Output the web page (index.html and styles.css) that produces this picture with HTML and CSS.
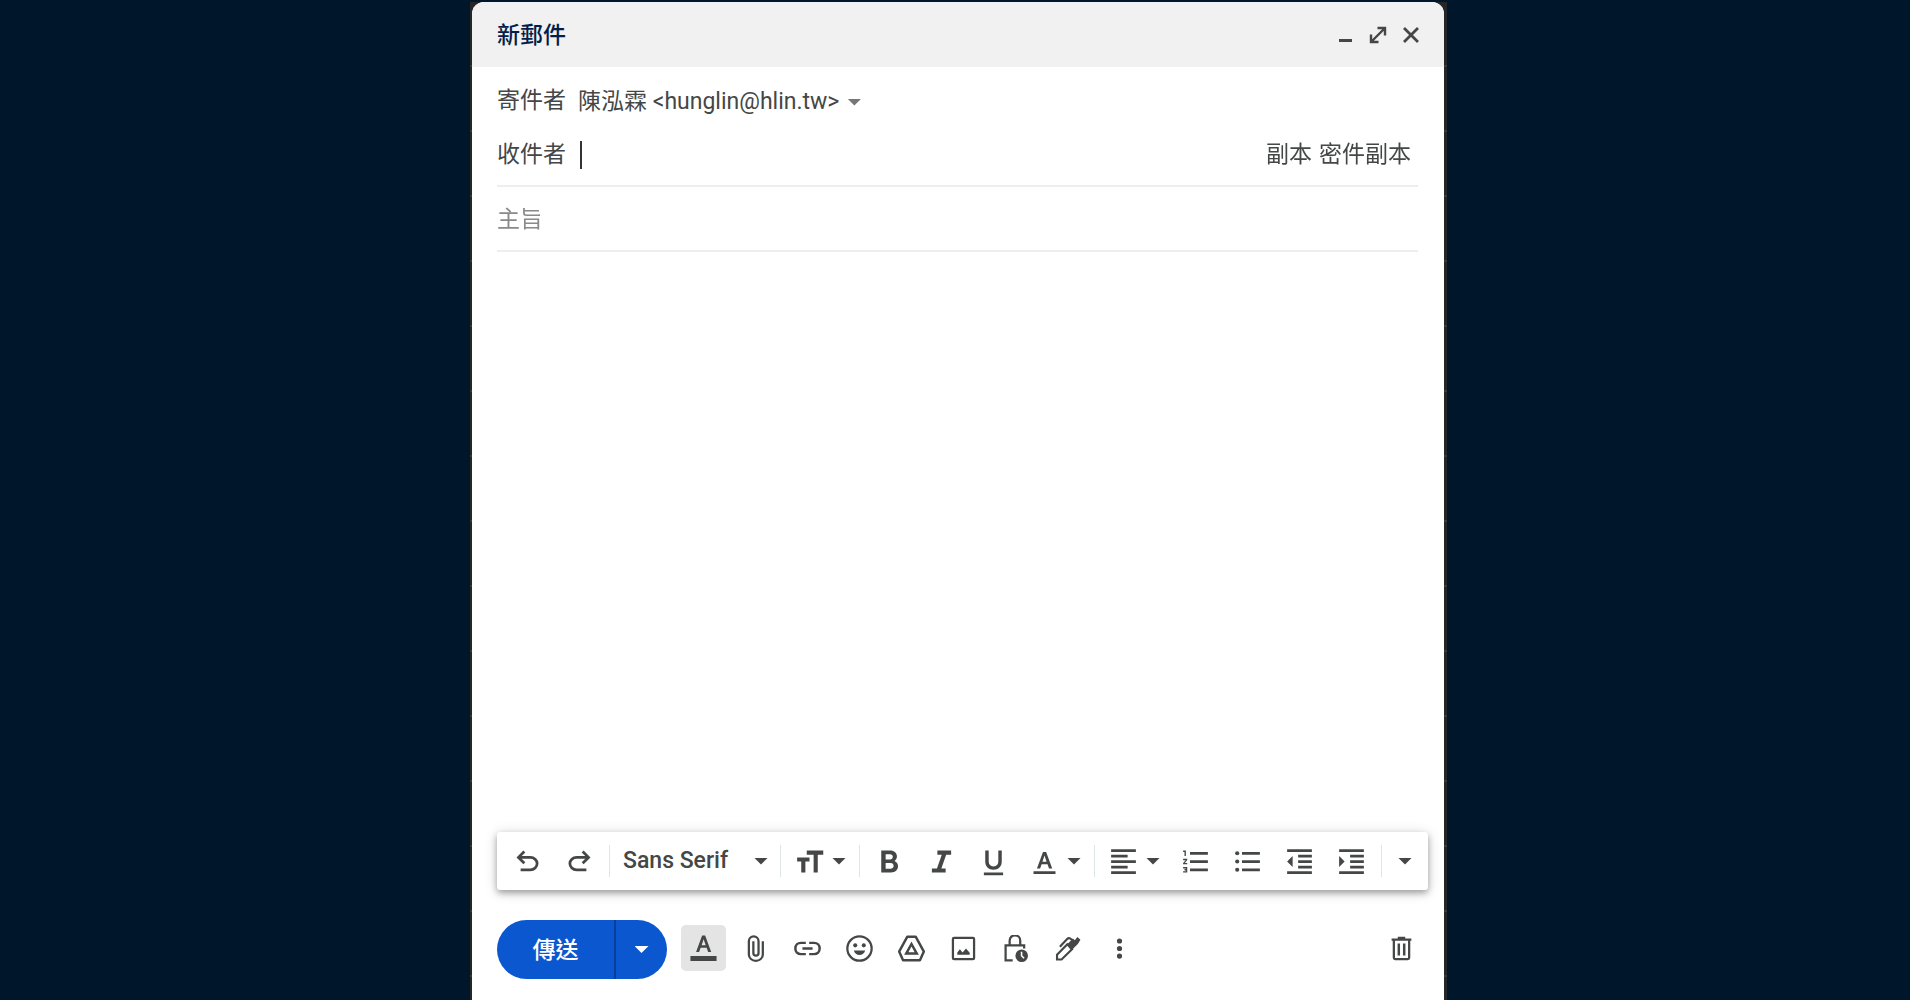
FILE: index.html
```html
<!DOCTYPE html>
<html lang="zh-Hant">
<head>
<meta charset="utf-8">
<title>新郵件</title>
<meta name="viewport" content="width=device-width, initial-scale=1">
<link rel="stylesheet" href="styles.css">
</head>
<body>
<div class="frame">
<main class="compose">
  <header class="titlebar">
    <h1 class="title">新郵件</h1>
    <div class="window-actions">
      <button type="button" aria-label="縮到最小"><svg viewBox="0 0 18 18"><path d="M3 13h13v3H3z"/></svg></button>
      <button type="button" aria-label="全螢幕"><svg viewBox="0 0 18 18"><path d="M8.500 2h7.500v7.500M2 8.500V16h7.500M2.500 15.500l13-13" fill="none" stroke="currentColor" stroke-width="2.400"/></svg></button>
      <button type="button" aria-label="關閉"><svg viewBox="0 0 18 18"><path d="M2 2l14 14M16 2L2 16" fill="none" stroke="currentColor" stroke-width="2.800"/></svg></button>
    </div>
  </header>

  <form class="mail">
    <div class="fields">
      <div class="row from">
        <span class="label">寄件者</span>
        <button type="button" class="sender">陳泓霖 &lt;hunglin@hlin.tw&gt;<span class="caret"></span></button>
      </div>
      <div class="row to">
        <label class="label" for="to">收件者</label>
        <span class="cursor"></span>
        <input id="to" class="to-input" type="text" autofocus>
        <div class="copies"><a href="#cc">副本</a><a href="#bcc">密件副本</a></div>
      </div>
      <div class="row subject">
        <input class="subject-input" type="text" placeholder="主旨" aria-label="主旨">
      </div>
    </div>

    <textarea class="body" aria-label="郵件內文"></textarea>

    <div class="format" role="toolbar" aria-label="格式設定">
      <div class="group">
        <button type="button" class="tool" aria-label="復原"><svg viewBox="0 0 24 24"><path d="M7 19v-2h7.100q1.575 0 2.738-1T18 13.500 16.838 11 14.100 10H7.800l2.600 2.600L9 14 4 9l5-5 1.400 1.400L7.800 8h6.300q2.425 0 4.163 1.575T20 13.500t-1.737 3.925T14.100 19z"/></svg></button>
        <button type="button" class="tool" aria-label="重做"><svg viewBox="0 0 24 24"><path d="M17 19v-2H9.900q-1.575 0-2.738-1T6 13.500 7.162 11 9.900 10h6.300l-2.600 2.600L15 14l5-5-5-5-1.400 1.400L16.200 8H9.900Q7.475 8 5.737 9.575T4 13.500t1.737 3.925T9.900 19z"/></svg></button>
      </div>
      <div class="group">
        <button type="button" class="font">Sans Serif<span class="caret"></span></button>
      </div>
      <div class="group">
        <button type="button" class="tool drop" aria-label="大小"><svg viewBox="0 0 24 24"><path d="M10 4v3h5v13h3V7h4V4zM3 12h3v8h3v-8h3V9H3z"/></svg><span class="caret"></span></button>
      </div>
      <div class="group">
        <button type="button" class="tool" aria-label="粗體"><svg viewBox="0 0 24 24"><path d="M6 4v16h7.200c2.900 0 5-1.800 5-4.500 0-1.900-1-3.200-2.500-3.900 1-.7 1.700-1.800 1.700-3.200C17.400 5.700 15.400 4 12.600 4zm3.200 2.700h3.200c1.200 0 2 .7 2 1.900s-.8 1.900-2 1.900H9.200zm0 6.300h3.600c1.400 0 2.200.8 2.200 2.100s-.8 2.100-2.200 2.100H9.200z"/></svg></button>
        <button type="button" class="tool" aria-label="斜體"><svg viewBox="0 0 24 24"><path d="M9 4v3h3.200l-3.500 10H5v3h10v-3h-3.100l3.500-10H19V4z"/></svg></button>
        <button type="button" class="tool" aria-label="底線"><svg viewBox="0 0 24 24"><path d="M12 18c3.600 0 6-2.300 6-6V4h-2.500v8c0 2.200-1.300 3.600-3.500 3.600S8.500 14.200 8.500 12V4H6v8c0 3.700 2.400 6 6 6zm-7 2v2h14v-2z"/></svg></button>
        <button type="button" class="tool drop" aria-label="文字顏色"><svg viewBox="0 0 24 24"><path d="M6.500 17h2.300l1.100-3h4.300l1.100 3h2.300L13.200 5h-2.300zm4-4.900L12 7.700l1.500 4.400zM4 19v2h16v-2z"/></svg><span class="caret"></span></button>
      </div>
      <div class="group">
        <button type="button" class="tool drop" aria-label="對齊"><svg viewBox="0 0 24 24"><path d="M3 3h18v2H3zm0 4h12v2H3zm0 4h18v2H3zm0 4h12v2H3zm0 4h18v2H3z"/></svg><span class="caret"></span></button>
        <button type="button" class="tool" aria-label="編號清單"><svg viewBox="0 0 24 24"><path d="M8 5h13v2H8zm0 6h13v2H8zm0 6h13v2H8zM4 8h1V4H3v1h1zM3 10.900V10h3v.9L4.200 13H6v1H3v-.9L4.800 11H3zM3 16v1h2v.5H4v1h1v.5H3v1h3v-4z"/></svg></button>
        <button type="button" class="tool" aria-label="項目符號清單"><svg viewBox="0 0 24 24"><path d="M8 5h13v2H8zm0 6h13v2H8zm0 6h13v2H8z"/><circle cx="4.500" cy="6" r="1.500"/><circle cx="4.500" cy="12" r="1.500"/><circle cx="4.500" cy="18" r="1.500"/></svg></button>
        <button type="button" class="tool" aria-label="減少縮排"><svg viewBox="0 0 24 24"><path d="M3 3h18v2H3zm8 4h10v2H11zm0 4h10v2H11zm0 4h10v2H11zm-8 4h18v2H3zM7 8v8l-4-4z"/></svg></button>
        <button type="button" class="tool" aria-label="增加縮排"><svg viewBox="0 0 24 24"><path d="M3 3h18v2H3zm8 4h10v2H11zm0 4h10v2H11zm0 4h10v2H11zm-8 4h18v2H3zM3 8v8l4-4z"/></svg></button>
      </div>
      <div class="group last">
        <button type="button" class="tool more" aria-label="更多格式設定選項"><span class="caret"></span></button>
      </div>
    </div>

    <div class="actions">
      <div class="send">
        <button type="submit" class="send-main">傳送</button>
        <button type="button" class="send-more" aria-label="更多傳送選項"><span class="caret"></span></button>
      </div>
      <div class="inserts">
        <button type="button" class="tool active" aria-label="格式選項"><svg viewBox="0 0 24 24"><path d="M6.600 14.500h2.200l1.100-3h4.400l1.100 3h2.200L13.200 2.600h-2.200zm4-4.900l1.500-4.400 1.500 4.400zM2.500 17.500h19v3.600h-19z"/></svg></button>
        <button type="button" class="tool" aria-label="附加檔案"><svg viewBox="0 0 24 24"><path d="M18.500 5.500v11.800c0 3.200-2.800 5.700-6.200 5.700s-6.200-2.500-6.200-5.700V5.500c0-2.400 1.900-4.300 4.300-4.300s4.300 1.900 4.300 4.300V16c0 1.400-.9 2.400-2.300 2.400S10.100 17.400 10.100 16V5.500" fill="none" stroke="currentColor" stroke-width="2"/></svg></button>
        <button type="button" class="tool" aria-label="插入連結"><svg viewBox="0 0 24 24"><path d="M10.500 17H6.200c-3 0-5-2-5-5s2-5 5-5h4.300M13.500 7h4.300c3 0 5 2 5 5s-2 5-5 5h-4.300M7.500 12h9" fill="none" stroke="currentColor" stroke-width="2.200"/></svg></button>
        <button type="button" class="tool" aria-label="插入表情符號"><svg viewBox="0 0 24 24"><circle cx="12" cy="12" r="10.800" fill="none" stroke="currentColor" stroke-width="2"/><circle cx="8.200" cy="9.200" r="1.800"/><circle cx="15.800" cy="9.200" r="1.800"/><path d="M7 13.800h10c-.6 2.500-2.600 4-5 4s-4.400-1.500-5-4z"/></svg></button>
        <button type="button" class="tool" aria-label="使用雲端硬碟插入檔案"><svg viewBox="0 0 24 24"><path d="M8.300 1.500h7.400l7.300 13.200-3.500 7.800h-15L1 14.700z" fill="none" stroke="currentColor" stroke-width="2.200" stroke-linejoin="round"/><path d="M12 8l4.700 8.500H7.300z" fill="none" stroke="currentColor" stroke-width="2.200"/></svg></button>
        <button type="button" class="tool" aria-label="插入相片"><svg viewBox="0 0 24 24"><rect x="2.600" y="2.600" width="18.800" height="18.800" rx="1" fill="none" stroke="currentColor" stroke-width="2"/><path d="M6.500 17.500v-2l2.300-2.800 2.400 2.800 3-3.500 3.300 3.700v1.800z"/></svg></button>
        <button type="button" class="tool" aria-label="切換機密模式"><svg viewBox="0 0 24 24"><path d="M9.500 22.500H3.200V9.200h16.500V12M6.800 9V5C6.800 2.300 8.800.3 11.500.3S16.200 2.300 16.200 5v4" fill="none" stroke="currentColor" stroke-width="2"/><path d="M17.500 12.800a5.600 5.600 0 1 0 0 11.200 5.600 5.600 0 0 0 0-11.200zm-.8 2h1.400v3.400l2 2-1 1-2.400-2.500z"/></svg></button>
        <button type="button" class="tool" aria-label="插入簽名"><svg viewBox="0 0 24 24"><path d="M12.500 7.500l-9.800 10v4.300h4l10-9.800M5.200 10.500l6.500-7c1-1 2-1 3-.2l1.800 1.500" fill="none" stroke="currentColor" stroke-width="1.900"/><path d="M11.200 8.800l5.600-5.600 1.700 1.500 2.300-3 2.700 2.600-2.300 3.700-5.800 5.800z"/></svg></button>
        <button type="button" class="tool" aria-label="更多選項"><svg viewBox="0 0 24 24"><circle cx="12" cy="5.300" r="2.300"/><circle cx="12" cy="12" r="2.300"/><circle cx="12" cy="18.700" r="2.300"/></svg></button>
      </div>
      <button type="button" class="tool discard" aria-label="捨棄草稿"><svg viewBox="0 0 24 24"><path d="M5.200 4.500v15.800c0 .7.500 1.200 1.200 1.200h11.200c.7 0 1.200-.5 1.200-1.200V4.500" fill="none" stroke="currentColor" stroke-width="2"/><path d="M3.200 3h5.500V1.500h6.600V3h5.500v2H3.200zM8.500 7.500h2.200v10.800H8.500zm4.800 0h2.200v10.800h-2.200z"/></svg></button>
    </div>
  </form>
</main>
</div>
</body>
</html>
```
FILE: styles.css
```css
* { box-sizing: border-box; }

body {
  margin: 0;
  padding: 2px 0 0 7px;
  background: #00162b;
  color: #444746;
  font: 23px/32px Roboto, "Noto Sans CJK TC", sans-serif;
}

button, input, textarea {
  margin: 0;
  padding: 0;
  border: 0;
  background: none;
  color: inherit;
  font: inherit;
  outline: 0;
}

button { cursor: pointer; }

svg { display: block; fill: currentColor; }

.frame {
  display: flex;
  max-width: 977px;
  min-height: calc(100vh - 2px);
  margin: 0 auto;
  padding: 0 3px 0 2px;
  background: repeating-linear-gradient(#262626 0 63px, #3a3a3a 63px 65px);
}

.compose {
  display: flex;
  flex: 1;
  flex-direction: column;
  min-width: 0;
  background: #fff;
  border-radius: 12px 12px 0 0;
  overflow: hidden;
}

.titlebar {
  display: flex;
  align-items: center;
  justify-content: space-between;
  height: 65px;
  padding: 1px 24px 0 25px;
  background: #f1f1f1;
}

.title {
  margin: 0;
  padding-top: 1px;
  color: #041e49;
  font-size: 23px;
  font-weight: 500;
}

.window-actions { display: flex; gap: 15px; }
.window-actions svg { width: 18px; height: 18px; }

.mail {
  display: flex;
  flex: 1;
  flex-direction: column;
}

.fields { padding: 7px 26px 0 25px; }

.row { display: flex; align-items: center; }

.label { width: 81px; }

.from { height: 54px; }

.sender { display: flex; align-items: center; gap: 8px; padding-top: 2px; }
.sender .caret { background: #747775; }

.to {
  height: 59px;
  padding: 0 7px 3px 0;
  border-bottom: 2px solid #eceff0;
}

.cursor { width: 2px; height: 28px; margin-left: 2px; background: #333; }

.to-input { flex: 1; min-width: 0; height: 32px; caret-color: transparent; }

.copies { display: flex; gap: 7px; }
.copies a { color: inherit; text-decoration: none; }

.subject { height: 65px; padding-top: 3px; border-bottom: 2px solid #eceff0; }
.subject-input { flex: 1; min-width: 0; }
.subject-input::placeholder { color: #8a8a8a; opacity: 1; }

.body { flex: 1; padding: 12px 25px; resize: none; }

.caret {
  flex: none;
  width: 14px;
  height: 7px;
  background: currentColor;
  clip-path: polygon(0 0, 100% 0, 50% 100%);
}

.format {
  display: flex;
  align-items: center;
  height: 58px;
  margin: 0 16px 0 25px;
  padding-left: 1px;
  border-radius: 3px;
  background: #fff;
  box-shadow: 0 3px 6px rgba(0, 0, 0, .3), 0 2px 14px rgba(0, 0, 0, .16);
}

.group {
  display: flex;
  align-items: center;
  height: 32px;
  padding: 0 4px 0 3px;
  border-right: 1px solid #dfe4e6;
}

.group.last { flex: 1; justify-content: center; border: 0; }

.tool {
  display: flex;
  align-items: center;
  justify-content: center;
  width: 52px;
  height: 46px;
}

.tool svg { flex: none; width: 33px; height: 33px; }

.drop { gap: 6px; width: 71px; }

.more { width: 40px; }

.font {
  display: flex;
  align-items: center;
  justify-content: space-between;
  width: 163px;
  padding: 0 8px 0 10px;
  font-weight: 500;
}

.actions {
  display: flex;
  align-items: center;
  padding: 30px 16px 21px 25px;
}

.send {
  display: flex;
  height: 59px;
  border-radius: 30px;
  background: #0b57d0;
  color: #fff;
  overflow: hidden;
}

.send-main { width: 119px; padding-top: 2px; border-right: 2px solid #083f9b; font-weight: 500; }

.send-more { display: flex; align-items: center; justify-content: center; width: 51px; }

.inserts { display: flex; gap: 7px; margin: 0 0 3px 14px; }
.actions .tool { width: 45px; }
.actions .tool svg { width: 27px; height: 27px; }
.actions .active svg { width: 33px; height: 33px; }

.active { border-radius: 5px; background: #e4e4e4; }

.actions .discard { margin: 0 4px 3px auto; }
```
